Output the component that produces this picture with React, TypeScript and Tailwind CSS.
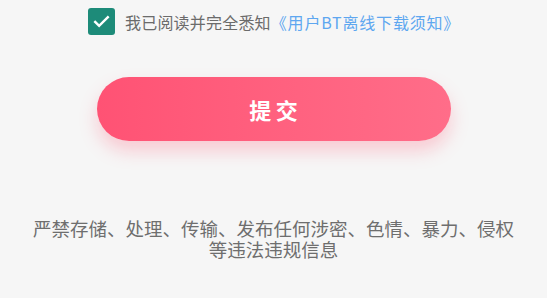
import React from 'react';

const App = () => {
  return (
    <div
      className="w-[547px] h-[298px] bg-[#f6f6f6] flex flex-col items-center overflow-hidden"
      style={{ fontFamily: '"Noto Sans CJK SC", "Noto Sans", sans-serif' }}
    >
      <div className="w-full flex items-center pl-[88px] pt-[8px]">
        <div className="w-[27px] h-[27px] rounded-[3px] bg-[#1d8b79] flex items-center justify-center">
          <svg width="19" height="19" viewBox="0 0 24 24" fill="none">
            <path d="M4 12.5l5 5L20 6.5" stroke="#fff" strokeWidth="3" strokeLinecap="square" />
          </svg>
        </div>
        <div className="ml-[10px] text-[16px] leading-[20px] text-[#6b6b6b] whitespace-nowrap">
          <span className="tracking-[0.2px]">我已阅读并完全悉知</span>
          <span className="text-[#5ea7f0] tracking-[0.8px]">《用户BT离线下载须知》</span>
        </div>
      </div>

      <button className="mt-[42px] w-[354px] h-[64px] rounded-full bg-gradient-to-r from-[#ff5274] to-[#ff6d89] shadow-[0_10px_18px_rgba(255,90,120,0.28)] flex items-center justify-center">
        <span className="text-white text-[22px] font-bold tracking-[0.2em] pl-[0.2em]">提交</span>
      </button>

      <div className="mt-[77px] w-[495px] text-center text-[18.5px] leading-[21px] text-[#6e6e6e]">
        严禁存储、处理、传输、发布任何涉密、色情、暴力、侵权等违法违规信息
      </div>
    </div>
  );
};

export default App;
